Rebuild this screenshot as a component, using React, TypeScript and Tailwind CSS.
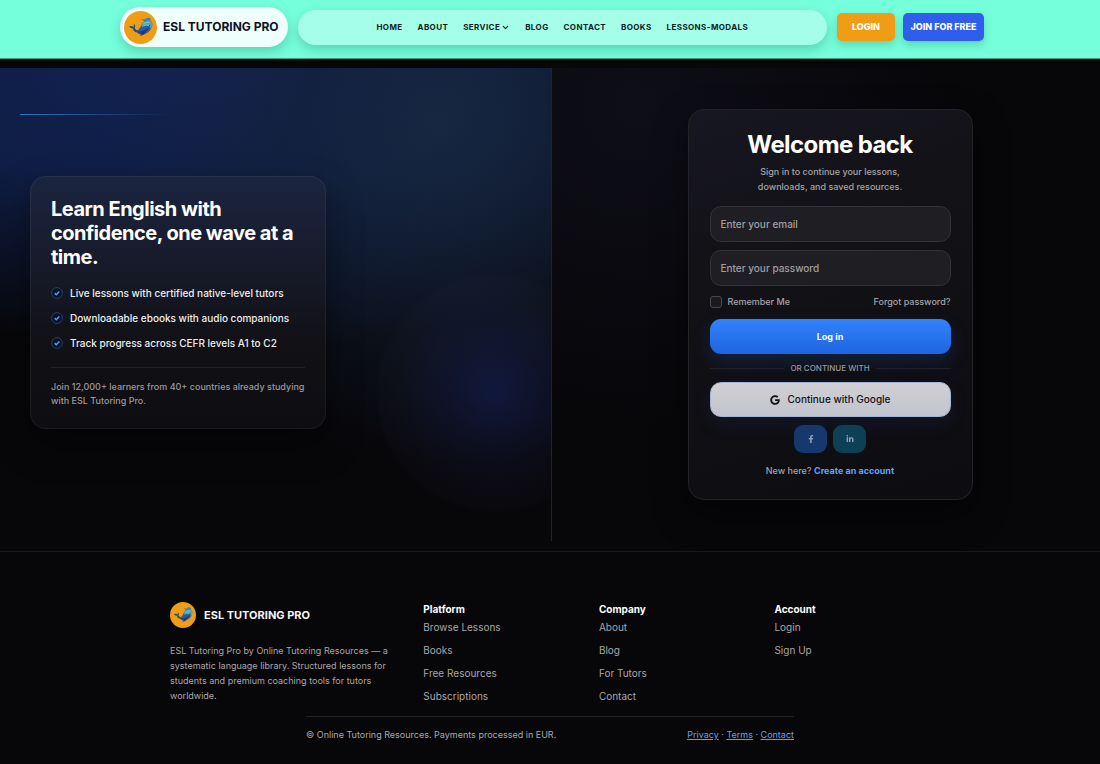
import { useState } from 'react';
import { ChevronDown } from 'lucide-react';
import { FaFacebookF, FaGoogle, FaLinkedinIn } from 'react-icons/fa';

const navLinks = ['Home', 'About', 'Service', 'Blog', 'Contact', 'Books', 'Lessons-Modals'];

const benefits = [
  'Live lessons with certified native-level tutors',
  'Downloadable ebooks with audio companions',
  'Track progress across CEFR levels A1 to C2',
];

const footerColumns = [
  { title: 'Platform', links: ['Browse Lessons', 'Books', 'Free Resources', 'Subscriptions'] },
  { title: 'Company', links: ['About', 'Blog', 'For Tutors', 'Contact'] },
  { title: 'Account', links: ['Login', 'Sign Up'] },
];

function WhaleLogo({ className }: { className: string }) {
  return (
    <svg viewBox="0 0 33 33" className={className} aria-hidden="true">
      <circle cx="16.5" cy="16.5" r="16.5" fill="#f09c14" />
      {/* Tail */}
      <path d="M5 15.400c2-.7 3.600-.4 4.500.5.600-1 .7-2 .1-3.300 1.700 1.100 2.100 2.700 1.200 4.300.6 1.500 1.800 2.300 3.600 2.400l-.8 2.200c-3-.3-4.400-1.900-4.800-4.100-1.400 0-2.700-.7-3.800-2z" fill="#24507e" />
      {/* Body */}
      <path d="M12.200 19.500c2.600 0 3.700-2.200 4.800-4.800 1.300-3.100 3.500-5.200 6.700-5.500 3.200-.2 4.900 1.700 4.600 4.600-.4 4.500-3.600 8-7.500 9.500-3.500 1.200-7.600.5-8.600-3.800z" fill="#2d5f9f" />
      <path d="M17 14.900c1.300-3.200 3.500-5.400 6.700-5.700 3.200-.2 4.900 1.700 4.600 4.600-.1 1.600-.6 3-1.300 4.300-1.300-3.200-4.500-4.600-10-3.200z" fill="#4aa6c0" />
      <path d="M20.600 11c-.8-1.300-1.800-2-3.200-2.300 1.300-.9 2.700-.9 3.800-.1.300-1.300 1.600-2.100 3.700-1.800 1.300.4 1.800 1.100 1.700 2.500-1.800-.3-3.800.2-6 1.700z" fill="#3688aa" />
      <path d="M13.300 20.600c4.700.2 9-1.700 12.300-5.500-.7 3.600-3.200 6.400-6.700 7.500-2.200.6-4.400 0-5.600-2z" fill="#29397c" />
      <path d="M19 13.200c2-1.700 4.200-2.300 6.700-1.700M18 15.600c2.200-1.400 4.300-1.800 6.500-1.200" stroke="#9cdde2" strokeWidth=".7" fill="none" />
      <path d="M18.600 20.500c-.3 2.100-1.300 3.500-3 4.300 2.600.1 4.700-1 6-4.300z" fill="#203671" />
      <circle cx="25.600" cy="14.600" r=".6" fill="#15264c" />
    </svg>
  );
}

function CheckBadge() {
  return (
    <svg viewBox="0 0 12 12" className="size-3 shrink-0" aria-hidden="true">
      <circle cx="6" cy="6" r="5.400" fill="#0b1322" stroke="#24406b" strokeWidth="1" />
      <path d="M3.700 6.100l1.600 1.600 3-3.300" fill="none" stroke="#4e9bff" strokeWidth="1.500" />
    </svg>
  );
}

function Header() {
  return (
    <header className="border-b border-[#3c9d82] bg-[#75ffdb]">
      <div className="mx-auto flex max-w-[868px] items-center pt-[7px] pb-[11px] pl-1">
        <a
          href="#"
          className="flex h-10 items-center gap-[6px] rounded-full bg-[#effffc] pr-[9px] pl-1 text-xs font-bold whitespace-nowrap text-[#0d1020] shadow-[0_5px_12px_rgba(0,60,45,0.22)]"
        >
          <WhaleLogo className="size-[33px]" />
          ESL TUTORING PRO
        </a>
        <nav className="ml-[10px] flex h-[35px] flex-1 items-center justify-center gap-[15px] rounded-full bg-[#a5ffe8] text-[8px] font-bold tracking-wider whitespace-nowrap text-[#0b1c22] uppercase shadow-[0_5px_12px_rgba(0,60,45,0.22)]">
          {navLinks.map((link) => (
            <a key={link} href="#" className="flex items-center gap-px">
              {link}
              {link === 'Service' && <ChevronDown className="size-[9px]" strokeWidth={3} />}
            </a>
          ))}
        </nav>
        <button className="ml-[10px] h-7 w-[58px] rounded-[5px] bg-[#f09d15] text-[9px] font-extrabold text-white shadow-[0_4px_8px_rgba(0,60,45,0.22)]">
          LOGIN
        </button>
        <button className="ml-2 h-7 w-[81px] rounded-[5px] bg-[#2e5eeb] text-[9px] font-extrabold whitespace-nowrap text-white shadow-[0_4px_8px_rgba(0,60,45,0.22)]">
          JOIN FOR FREE
        </button>
      </div>
    </header>
  );
}

function Intro() {
  return (
    <section className="relative flex items-center overflow-hidden border-r border-[#222229] bg-[radial-gradient(circle_120px_at_495px_325px,rgba(37,65,190,0.24)_0%,rgba(45,60,170,0.15)_40%,rgba(60,65,120,0.07)_80%,rgba(70,70,90,0.04)_97%,transparent_100%),radial-gradient(ellipse_60%_72%_at_80%_12%,rgba(24,40,64,0.85)_0%,rgba(20,34,56,0.6)_40%,transparent_100%),radial-gradient(ellipse_110%_60%_at_35%_0%,#122253_0%,#0f1e45_45%,transparent_100%)] px-[30px] pb-1">
      <div className="absolute top-[46px] left-5 h-px w-[150px] bg-gradient-to-r from-[#3276b9] to-transparent" />
      <div className="w-[296px] rounded-2xl border border-white/6 bg-[linear-gradient(180deg,#1b2540_0%,#171a2a_35%,#111116_65%,#0e0d11_100%)] bg-origin-border px-5 py-5 shadow-[0_16px_36px_rgba(0,0,0,0.4)]">
        <h2 className="text-xl leading-6 font-bold tracking-tight text-white">
          Learn English with confidence, one wave at a time.
        </h2>
        <ul className="mt-4 space-y-[9px] text-[10px] leading-4 font-medium text-[#eeeef1]">
          {benefits.map((benefit) => (
            <li key={benefit} className="flex items-center gap-[7px] whitespace-nowrap">
              <CheckBadge />
              {benefit}
            </li>
          ))}
        </ul>
        <p className="mt-4 border-t border-white/8 pt-3 text-[9px] leading-[14px] font-medium text-[#99999d]">
          Join 12,000+ learners from 40+ countries already studying with ESL Tutoring Pro.
        </p>
      </div>
    </section>
  );
}

function LoginCard() {
  const [email, setEmail] = useState('');
  const [password, setPassword] = useState('');
  const [remember, setRemember] = useState(false);

  const inputClass =
    'block h-9 w-full rounded-[11px] border border-[#333237] bg-[#1f1e22] px-[10px] text-[10px] font-medium text-white outline-none placeholder:text-[#a09fa3] focus:border-[#3b82f6]';

  return (
    <form
      onSubmit={(e) => e.preventDefault()}
      className="w-[285px] rounded-2xl border border-[#242328] bg-[linear-gradient(160deg,#171722_0%,#131217_30%,#0d0c10_100%)] px-[21px] py-5 text-center shadow-[0_14px_32px_rgba(0,0,0,0.5)]"
    >
      <h1 className="text-2xl leading-[30px] font-bold tracking-tight text-white">Welcome back</h1>
      <p className="mx-auto mt-1 max-w-[160px] text-[9px] leading-[15px] font-medium text-[#a4a3a7]">
        Sign in to continue your lessons, downloads, and saved resources.
      </p>

      <div className="mt-3 space-y-2">
        <input
          type="email"
          aria-label="Email"
          placeholder="Enter your email"
          value={email}
          onChange={(e) => setEmail(e.target.value)}
          className={inputClass}
        />
        <input
          type="password"
          aria-label="Password"
          placeholder="Enter your password"
          value={password}
          onChange={(e) => setPassword(e.target.value)}
          className={inputClass}
        />
      </div>

      <div className="mt-2 flex items-center justify-between text-[9px] leading-4 font-medium text-[#a4a3a7]">
        <label className="flex items-center gap-[6px]">
          <input
            type="checkbox"
            checked={remember}
            onChange={(e) => setRemember(e.target.checked)}
            className="size-3 appearance-none rounded-[3px] border border-[#4a494e] bg-[#1b1a1e] checked:bg-[#2f7df6]"
          />
          Remember Me
        </label>
        <a href="#">Forgot password?</a>
      </div>

      <button
        type="submit"
        className="mt-[9px] h-[35px] w-full rounded-[11px] bg-gradient-to-b from-[#3183fd] to-[#1f65df] text-[9px] font-bold text-white shadow-[0_8px_18px_rgba(30,90,200,0.22)]"
      >
        Log in
      </button>

      <div className="my-2 flex items-center gap-[6px] text-[8px] leading-3 font-medium whitespace-nowrap text-[#98979d]">
        <span className="h-px flex-1 bg-[#202128]" />
        OR CONTINUE WITH
        <span className="h-px flex-1 bg-[#202128]" />
      </div>

      <button
        type="button"
        className="flex h-[35px] w-full items-center justify-center gap-2 rounded-[11px] border border-[#a4b5d5] bg-gradient-to-b from-[#d0cfd3] to-[#c2c4ce] text-[10px] font-medium text-[#111217] shadow-[0_7px_18px_rgba(40,70,160,0.15)]"
      >
        <FaGoogle className="size-[10px]" />
        Continue with Google
      </button>

      <div className="mt-2 flex justify-center gap-[6px] text-[8px] text-[#8ca1b7]">
        <button type="button" aria-label="Facebook" className="flex h-7 w-[33px] items-center justify-center rounded-[9px] bg-[#17386e]">
          <FaFacebookF />
        </button>
        <button type="button" aria-label="LinkedIn" className="flex h-7 w-[33px] items-center justify-center rounded-[9px] bg-[#0d3f55]">
          <FaLinkedinIn />
        </button>
      </div>

      <p className="mt-[10px] text-[9px] leading-4 font-medium text-[#a4a3a7]">
        New here?{' '}
        <a href="#" className="font-bold text-[#5ca2fb]">
          Create an account
        </a>
      </p>
    </form>
  );
}

function Footer() {
  return (
    <footer className="mt-[10px] border-t border-[#19181c] pt-[50px] pb-[22px]">
      <div className="mx-auto grid max-w-[760px] grid-cols-[1.5fr_1fr_1fr_1fr] gap-5">
        <div>
          <a href="#" className="flex items-center gap-2 text-[11px] font-bold text-[#f4f4f5]">
            <WhaleLogo className="size-[26px]" />
            ESL TUTORING PRO
          </a>
          <p className="mt-[15px] max-w-[228px] text-[9px] leading-[15px] text-[#a8a7aa]">
            ESL Tutoring Pro by Online Tutoring Resources — a systematic language library. Structured lessons for
            students and premium coaching tools for tutors worldwide.
          </p>
        </div>
        {footerColumns.map((column) => (
          <div key={column.title}>
            <h3 className="text-[10px] leading-[15px] font-bold text-white">{column.title}</h3>
            <ul className="mt-[2px] space-y-[7px] text-[10px] leading-4 text-[#a8a7aa]">
              {column.links.map((link) => (
                <li key={link}>
                  <a href="#">{link}</a>
                </li>
              ))}
            </ul>
          </div>
        ))}
      </div>
      <div className="mx-auto mt-3 flex max-w-[488px] justify-between border-t border-[#222125] pt-[10px] text-[9px] leading-[15px] text-[#a8a7aa]">
        <span>© Online Tutoring Resources. Payments processed in EUR.</span>
        <span>
          <a href="#" className="text-[#659eed] underline">Privacy</a> ·{' '}
          <a href="#" className="text-[#659eed] underline">Terms</a> ·{' '}
          <a href="#" className="text-[#659eed] underline">Contact</a>
        </span>
      </div>
    </footer>
  );
}

export default function App() {
  return (
    <div className="min-h-screen bg-[#070609] font-['Inter',sans-serif]">
      <Header />
      <main className="mt-[9px] grid grid-cols-[552fr_548fr]">
        <Intro />
        <section className="flex items-center justify-center bg-[radial-gradient(circle_at_15%_8%,#0e0e17_0%,transparent_50%)] py-[41px] pl-2">
          <LoginCard />
        </section>
      </main>
      <Footer />
    </div>
  );
}
